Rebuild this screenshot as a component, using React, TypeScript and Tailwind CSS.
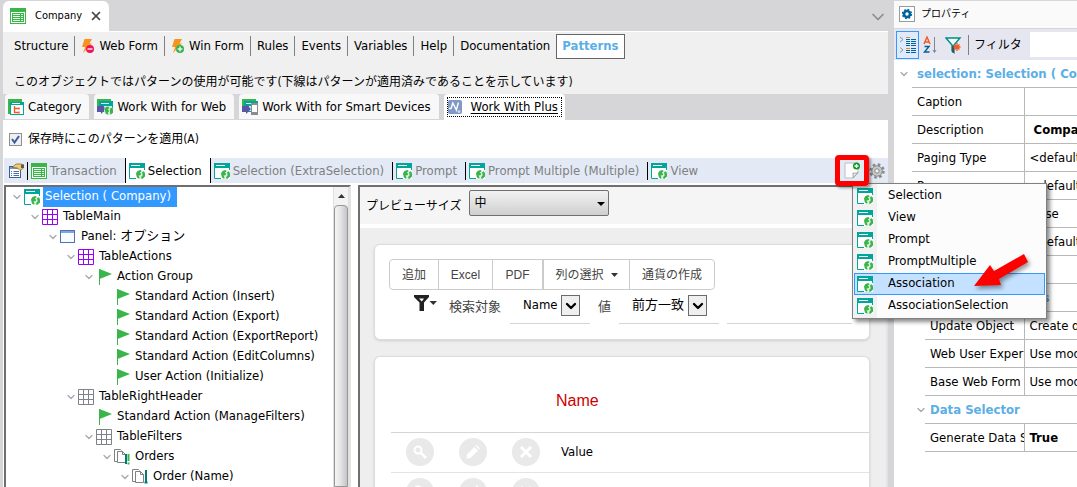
import React, { useState } from "react";
import { ChevronDown, X } from "lucide-react";
import clsx from "clsx";

/* ---------- icons ---------- */

function PageIcon() {
  return (
    <svg width="16" height="16" viewBox="0 0 16 16" className="shrink-0" aria-hidden="true">
      <path d="M0 0h16v16H0z" fill="#fff" />
      <path d="M0 0h16v5H0z" fill="#00a59b" />
      <path d="M2 2h9v1H2z" fill="#fff" />
      <path d="M.5 5v10.500H7M15.500 5v2" fill="none" stroke="#00a59b" />
      <circle cx="11.500" cy="11.500" r="4.500" fill="#dff3e2" />
      <path
        d="M7 10.500 8.500 8l3-1 1 1.300-1.700 1.400 1.500 1-.8 1.500-2 .3 1 2-.5 1.300-2-1.300zM13 9.300l2-1 1 2.200v3l-2.500 2.300-1.500-.3.500-2 1.200-1.200z"
        fill="#39b54a"
      />
    </svg>
  );
}

function ListIcon() {
  return (
    <svg width="16" height="16" viewBox="0 0 16 16" className="shrink-0" aria-hidden="true">
      <path d="M0 0h16v16H0z" fill="#39b54a" />
      <path d="M1 4h14v11H1z" fill="#fff" />
      <path d="M2 5h12v9H2z" fill="#39b54a" />
      <path d="M3 6.500h7M3 8.500h7M3 10.500h7M3 12.500h7M11 6.500h2M11 8.500h2M11 10.500h2M11 12.500h2" stroke="#e8f7ea" />
    </svg>
  );
}

function BoltIcon({ plus }: { plus?: boolean }) {
  return (
    <svg width="14" height="16" viewBox="0 0 14 16" className="shrink-0" aria-hidden="true">
      <path d="M3.500 1H11L8.500 5.500H11L2 15l2.200-6H1z" fill="#f7941e" />
      <circle cx="9" cy="11" r="4" fill={plus ? "#2fb34a" : "#f0145a"} />
      <path d="M6.500 11h5" stroke="#fff" strokeWidth="1.300" />
      {plus && <path d="M9 8.500v5" stroke="#fff" strokeWidth="1.300" />}
    </svg>
  );
}

function CategoryIcon() {
  return (
    <svg width="16" height="16" viewBox="0 0 16 16" className="shrink-0" aria-hidden="true">
      <path d="M0 0h14v3H3v12H0z" fill="#39b54a" />
      <path d="M2 3h14v13H2z" fill="#00a59b" />
      <path d="M3 6h12v9H3z" fill="#fff" />
      <path d="M4 4.500h8" stroke="#fff" />
      <path d="M6.500 7v6.500H11M6.500 9.500H11M11 8.500v2M11 12.500v2" stroke="#f15a24" strokeWidth="1.400" fill="none" />
    </svg>
  );
}

function WorkWithIcon({ device }: { device?: boolean }) {
  return (
    <svg width="16" height="16" viewBox="0 0 16 16" className="shrink-0" aria-hidden="true">
      <path d="M0 0h14v3H3v5H0z" fill="#39b54a" />
      <path d="M2 2h14v11H2z" fill="#00a59b" />
      <path d="M4 4h8v1H4zM7 7h8v5H7z" fill="#d5eeec" />
      <path d="M0 7h4V5l5 5-5 5v-2H0z" fill="#5a55a5" />
      {device ? (
        <>
          <path d="M9 4h7v12H9z" fill="#8c8c8c" />
          <path d="M10 6h5v7h-5z" fill="#fff" />
        </>
      ) : (
        <>
          <circle cx="11.500" cy="11.500" r="4.500" fill="#d5eeda" />
          <path d="M7.500 10 9 8l2.500-.5.8 1.500-1.500 1.200 1.500 1.500-1.500 2 .5 2-2.500-1zM13 9.500l2-.8 1 2v3l-2.500 2-.5-2z" fill="#39b54a" />
        </>
      )}
    </svg>
  );
}

function PlusPatternIcon() {
  return (
    <svg width="15" height="15" viewBox="0 0 15 15" className="shrink-0" aria-hidden="true">
      <rect width="14" height="14" rx="2" fill="#8099c6" />
      <path d="M1 8.500h2l1.800-5.500 3.600 7 2-7.500" fill="none" stroke="#fff" strokeWidth="1.400" />
      <circle cx="11" cy="11.500" r="1.500" fill="#c6d4ee" />
    </svg>
  );
}

function PropertiesIcon() {
  return (
    <svg width="17" height="16" viewBox="0 0 17 16" className="shrink-0" aria-hidden="true">
      <rect x="1.500" y="3.500" width="11" height="11" fill="#fff" stroke="#3d5f97" />
      <path d="M2 4h10v2H2z" fill="#7a9acb" />
      <path d="M3 8.500h1M5.500 8.500H11M3 10.500h1M5.500 10.500H11M3 12.500h1M5.500 12.500H11" stroke="#4b6ba3" />
      <path d="M4 4.500 8 1h5l2.500 1v3L12 7.500 9.500 5z" fill="#f0cb72" stroke="#7d5c1c" strokeWidth=".7" />
      <path d="M13 1.500h3v3.500h-3z" fill="#6a5a3a" />
    </svg>
  );
}

function GridIcon({ color }: { color: string }) {
  return (
    <svg width="16" height="16" viewBox="0 0 16 16" className="shrink-0" aria-hidden="true">
      <path d="M.5.5h15v15H.5zM5.500.5v15M10.500.5v15M.5 5.500h15M.5 10.500h15" fill="#fff" stroke={color} />
    </svg>
  );
}

function PanelIcon() {
  return (
    <svg width="16" height="16" viewBox="0 0 16 16" className="shrink-0" aria-hidden="true">
      <rect x=".5" y="1.500" width="14" height="12" fill="#f7faff" stroke="#4a72b4" />
      <path d="M1 2h13v2H1z" fill="#7fa5e0" />
    </svg>
  );
}

function FlagIcon() {
  return (
    <svg width="16" height="16" viewBox="0 0 16 16" className="shrink-0" aria-hidden="true">
      <path d="M3.500 0v16" stroke="#39b54a" />
      <path d="M3.500 0 16 5 3.500 10z" fill="#39b54a" />
    </svg>
  );
}

function OrderIcon({ many }: { many?: boolean }) {
  return (
    <svg width="16" height="16" viewBox="0 0 16 16" className="shrink-0" aria-hidden="true">
      <path d="M3 12.500H.5V.5h6l1 1M3.500 2.500h5l3 3v8h-8z" fill="#fff" stroke="#808080" />
      <path d="M8.500 2.500v3h3" fill="none" stroke="#808080" />
      {many ? (
        <>
          <path d="M12 5v10" stroke="#007d73" strokeWidth="2" />
          <path d="M14.500 5v7M14.500 13.500v2" stroke="#39b54a" strokeWidth="2" />
        </>
      ) : (
        <path d="M14 1v13M12.500 13.500h3" stroke="#007d73" strokeWidth="2" />
      )}
    </svg>
  );
}

function NoteIcon() {
  return (
    <svg width="16" height="17" viewBox="0 0 16 17" className="shrink-0" aria-hidden="true">
      <path d="M1 1h13v10l-5 5H1z" fill="#fdfdfd" stroke="#b9bfc6" />
      <path d="M9 16c.5-2-.2-4 0-5 1.500.3 3.500.2 5-.5z" fill="#e8ebee" stroke="#8d949b" strokeWidth=".8" />
      <circle cx="12.500" cy="4" r="3.500" fill="#0f9a1d" />
      <path d="M10.500 4h4M12.500 2v4" stroke="#fff" strokeWidth="1.300" />
    </svg>
  );
}

function GearIcon() {
  return (
    <svg width="16" height="16" viewBox="0 0 16 16" className="shrink-0" aria-hidden="true">
      <circle cx="8" cy="8" r="6.500" fill="none" stroke="#8a8a8a" strokeWidth="2.500" strokeDasharray="2.600 2.500" />
      <circle cx="8" cy="8" r="5.200" fill="#c9c9c9" stroke="#8a8a8a" />
      <circle cx="8" cy="8" r="2.200" fill="#eef2f9" stroke="#858585" />
    </svg>
  );
}

function BlueGearIcon() {
  return (
    <svg width="16" height="16" viewBox="0 0 16 16" className="shrink-0" aria-hidden="true">
      <rect x=".5" y=".5" width="15" height="15" fill="#fff" stroke="#9a9a9a" />
      <circle cx="8" cy="8" r="3" fill="none" stroke="#00629b" strokeWidth="2.600" />
      <circle cx="8" cy="8" r="4.500" fill="none" stroke="#00629b" strokeWidth="1.400" strokeDasharray="1.800 1.730" />
    </svg>
  );
}

function CategorizedIcon() {
  return (
    <svg width="18" height="18" viewBox="0 0 18 18" aria-hidden="true">
      <path d="m1 1 3 2.500L1 6M1 11.500 4 14l-3 2.500" fill="none" stroke="#8b949c" />
      <path d="M7 1.500h4M7 12.500h4" stroke="#f58220" />
      <path d="M7 3.500h4M12 3.500h5M7 5.500h4M12 5.500h5M7 7.500h4M12 7.500h5M7 9.500h4M12 9.500h5M12 12.500h5M7 14.500h4M12 14.500h5M7 16.500h4M12 16.500h5" stroke="#00629b" />
    </svg>
  );
}

function SortIcon() {
  return (
    <svg width="14" height="18" viewBox="0 0 14 18" aria-hidden="true">
      <path d="M1 8 4 1l3 7M2 6h4" fill="none" stroke="#f15a24" strokeWidth="1.400" />
      <path d="M1.500 10.500H6L1.500 16H6.500" fill="none" stroke="#00629b" strokeWidth="1.400" />
      <path d="M11.500 1v15M10 14l1.500 2.500L13 14" fill="none" stroke="#7d8790" />
    </svg>
  );
}

function FilterIcon() {
  return (
    <svg width="17" height="18" viewBox="0 0 17 18" aria-hidden="true">
      <path d="M1 2h14L9 9v7.500L7 15V9z" fill="#f2f8f7" stroke="#008f83" strokeWidth="1.400" />
      <path d="M8 9.500v7" stroke="#3a4a55" strokeWidth="1.800" />
      <path d="M12 7v8M8.500 11h7M9.500 8.500l5 5M14.500 8.500l-5 5" stroke="#f15a24" strokeWidth="1.300" />
    </svg>
  );
}

function FunnelIcon() {
  return (
    <svg width="23" height="16" viewBox="0 0 23 16" aria-hidden="true">
      <path d="M0 0h15v2L10 7.500V16H5.500V7.500L0 2z" fill="#222" />
      <path d="M5 3.500h5L7.800 6.500z" fill="#fff" />
      <path d="M15.500 6H23l-3.700 4z" fill="#333" />
    </svg>
  );
}

/* ---------- data ---------- */

const editorTabs = [
  { label: "Structure" },
  { label: "Web Form", icon: <BoltIcon /> },
  { label: "Win Form", icon: <BoltIcon plus /> },
  { label: "Rules" },
  { label: "Events" },
  { label: "Variables" },
  { label: "Help" },
  { label: "Documentation" },
];

const patternTabs = [
  { label: "Category", icon: <CategoryIcon /> },
  { label: "Work With for Web", icon: <WorkWithIcon /> },
  { label: "Work With for Smart Devices", icon: <WorkWithIcon device /> },
];

const nodeTabs = [
  { label: "Transaction", icon: <ListIcon /> },
  { label: "Selection", icon: <PageIcon /> },
  { label: "Selection (ExtraSelection)", icon: <PageIcon /> },
  { label: "Prompt", icon: <PageIcon /> },
  { label: "Prompt Multiple (Multiple)", icon: <PageIcon /> },
  { label: "View", icon: <PageIcon /> },
];

const indents = ["pl-1", "pl-[22px]", "pl-10", "pl-[58px]", "pl-[76px]", "pl-[94px]", "pl-[112px]"];

const treeNodes = [
  { label: "Selection ( Company)", level: 0, open: true, icon: <PageIcon /> },
  { label: "TableMain", level: 1, open: true, icon: <GridIcon color="#9900f5" /> },
  { label: "Panel: オプション", level: 2, open: true, icon: <PanelIcon /> },
  { label: "TableActions", level: 3, open: true, icon: <GridIcon color="#9900f5" /> },
  { label: "Action Group", level: 4, open: true, icon: <FlagIcon /> },
  { label: "Standard Action (Insert)", level: 5, icon: <FlagIcon /> },
  { label: "Standard Action (Export)", level: 5, icon: <FlagIcon /> },
  { label: "Standard Action (ExportReport)", level: 5, icon: <FlagIcon /> },
  { label: "Standard Action (EditColumns)", level: 5, icon: <FlagIcon /> },
  { label: "User Action (Initialize)", level: 5, icon: <FlagIcon /> },
  { label: "TableRightHeader", level: 3, open: true, icon: <GridIcon color="#7d828a" /> },
  { label: "Standard Action (ManageFilters)", level: 4, icon: <FlagIcon /> },
  { label: "TableFilters", level: 4, open: true, icon: <GridIcon color="#7d828a" /> },
  { label: "Orders", level: 5, open: true, icon: <OrderIcon many /> },
  { label: "Order (Name)", level: 6, open: true, icon: <OrderIcon /> },
];

const menuItems = ["Selection", "View", "Prompt", "PromptMultiple", "Association", "AssociationSelection"];

type Property = { name: string; value: string; bold?: boolean };

const selectionProps: Property[] = [
  { name: "Caption", value: "" },
  { name: "Description", value: " Company", bold: true },
  { name: "Paging Type", value: "<default>" },
  { name: "Page", value: "<default>" },
  { name: "", value: "False" },
  { name: "", value: "<default>" },
  { name: "", value: "" },
];

const templateProps: Property[] = [
  { name: "Update Object", value: "Create default" },
  { name: "Web User Experience", value: "Use model" },
  { name: "Base Web Form", value: "Use model" },
];

const dataProps: Property[] = [{ name: "Generate Data Selector", value: "True", bold: true }];

/* ---------- panels ---------- */

function NodeTree() {
  const [selected, setSelected] = useState(0);

  return (
    <div className="flex w-[347px] shrink-0 overflow-hidden border-t-2 border-l-2 border-r-2 border-t-[#6f6f6f] border-l-[#6f6f6f] border-r-[#e3e3e3]">
      <ul className="min-w-0 flex-1">
        {treeNodes.map((node, i) => (
          <li key={i} className={clsx("flex h-5 items-center whitespace-nowrap", indents[node.level])}>
            <span className="flex w-3.5 shrink-0 justify-center">
              {node.open && <ChevronDown className="h-3 w-3 text-[#a3a9af]" strokeWidth={2.5} />}
            </span>
            {node.icon}
            <button
              onClick={() => setSelected(i)}
              className={clsx("ml-[3px] h-5 px-0.5 pb-0.5 leading-4", i === selected && "bg-[#3399ff] pr-1.5 text-white")}
            >
              {node.label}
            </button>
          </li>
        ))}
      </ul>
      <div className="flex w-4 flex-col border-x border-[#e0e0e0] bg-[#f3f3f3]">
        <div className="flex h-[18px] items-center justify-center">
          <svg width="7" height="4" viewBox="0 0 7 4" aria-hidden="true">
            <path d="M0 4 3.500 0 7 4z" fill="#333" />
          </svg>
        </div>
        <div className="flex-1 rounded-t-sm border border-[#979797] bg-linear-to-r from-[#f5f5f5] via-[#e3e3e6] to-[#c4c4c9]" />
      </div>
    </div>
  );
}

function PreviewSelect({ id, value, className }: { id: string; value: string; className: string }) {
  return (
    <div className={clsx("flex h-[29px] items-start border-b border-[#d5d5d5] pl-3", className)}>
      <div className="relative">
        <select
          id={id}
          className="h-5 appearance-none bg-transparent pr-[22px] pl-px text-black outline-none"
        >
          <option>{value}</option>
        </select>
        <span className="pointer-events-none absolute top-0 right-0 flex h-[21px] w-[19px] items-center justify-center border border-[#6b6b6b] bg-[#efefef]">
          <ChevronDown className="h-4 w-4 text-black" strokeWidth={3.5} />
        </span>
      </div>
    </div>
  );
}

function RowAction({ label, children }: { label: string; children: React.ReactNode }) {
  return (
    <button aria-label={label} className="flex h-7 w-7 items-center justify-center rounded-full bg-[#e9e9e9]">
      <svg width="14" height="14" viewBox="0 0 14 14" aria-hidden="true">
        {children}
      </svg>
    </button>
  );
}

function RowActions() {
  return (
    <div className="flex gap-[25px] pl-[15px]">
      <RowAction label="Display">
        <circle cx="5" cy="5" r="3.500" fill="none" stroke="#fff" strokeWidth="2" />
        <path d="m8 8 5 5" stroke="#fff" strokeWidth="2.500" />
      </RowAction>
      <RowAction label="Update">
        <path d="M1 9.500 8.500 2 12 5.500 4.500 13 .5 13.500zM9.500 1l1-1L14 3.500l-1 1z" fill="#fff" />
      </RowAction>
      <RowAction label="Delete">
        <path d="m2 2 10 10M12 2 2 12" stroke="#fff" strokeWidth="3" />
      </RowAction>
    </div>
  );
}

function Preview() {
  return (
    <div className="flex min-w-0 flex-1 flex-col overflow-hidden border-t-2 border-l-2 border-r-2 border-t-[#6f6f6f] border-l-[#6f6f6f] border-r-[#e3e3e3] bg-[#eeeeee]">
      <div className="flex h-[41px] shrink-0 items-start gap-2 border-b-4 border-white bg-[#f5f5f5] pt-[3px] pl-1.5">
        <label htmlFor="preview-size" className="pt-2 text-xs leading-4">
          プレビューサイズ
        </label>
        <div className="relative">
          <select
            id="preview-size"
            className="h-[26px] w-[140px] appearance-none rounded-xs border border-[#707070] bg-linear-to-b from-[#f2f2f2] to-[#cfcfcf] pl-1 text-xs"
          >
            <option>中</option>
          </select>
          <svg width="8" height="4" viewBox="0 0 8 4" className="pointer-events-none absolute top-3 right-1" aria-hidden="true">
            <path d="M0 0h8L4 4z" fill="#000" />
          </svg>
        </div>
      </div>

      <div className="mt-4 mr-4 ml-3.5 h-24 shrink-0 rounded-md border border-[#dcdcdc] bg-white px-3.5 pt-3.5 shadow-sm">
        <div className="inline-flex h-[31px] rounded-sm border border-[#ccc] font-['Liberation_Sans','Noto_Sans_CJK_JP',sans-serif] text-xs text-[#444]">
          <button className="w-12">追加</button>
          <button className="w-[54px] border-l border-[#ccc]">Excel</button>
          <button className="w-[50px] border-l border-[#ccc]">PDF</button>
          <button className="flex w-[87px] items-center justify-center gap-[7px] border-l-2 border-[#ccc]">
            列の選択
            <svg width="7" height="4" viewBox="0 0 7 4" aria-hidden="true">
              <path d="M0 0h7L3.500 4z" fill="#333" />
            </svg>
          </button>
          <button className="w-[85px] border-l border-[#ccc]">通貨の作成</button>
        </div>
        <div className="flex pt-[5px] pl-[25px] text-[13px]">
          <button aria-label="Filters" className="flex">
            <FunnelIcon />
          </button>
          <label htmlFor="filter-field" className="w-[61px] pl-3 leading-6 whitespace-nowrap text-[#444]">
            検索対象
          </label>
          <PreviewSelect id="filter-field" value="Name" className="ml-3 w-20" />
          <label htmlFor="filter-operator" className="w-[29px] pl-2 leading-6 text-[#444]">
            値
          </label>
          <PreviewSelect id="filter-operator" value="前方一致" className="w-[100px]" />
          <input aria-label="Filter value" className="ml-2 h-[29px] w-[125px] min-w-0 border-b border-[#d5d5d5] outline-none" />
        </div>
      </div>

      <div className="mt-4 mr-4 ml-3.5 flex-1 rounded-t-md border border-b-0 border-[#dcdcdc] bg-white pl-4 shadow-sm">
        <table className="w-full border-collapse">
          <thead>
            <tr className="h-[75px] border-b border-[#d5d5d5]">
              <th className="w-[165px]" />
              <th className="pt-3.5 text-left font-['Liberation_Sans',sans-serif] text-base font-normal text-[#cc0000]">Name</th>
            </tr>
          </thead>
          <tbody>
            <tr className="h-10 border-b border-[#e3e3e3]">
              <td>
                <RowActions />
              </td>
              <td className="pl-[5px]">Value</td>
            </tr>
            <tr className="h-10">
              <td>
                <RowActions />
              </td>
              <td />
            </tr>
          </tbody>
        </table>
      </div>
    </div>
  );
}

function AddNodeMenu() {
  const [active, setActive] = useState("Association");

  return (
    <div
      role="menu"
      className="absolute top-full left-1/2 z-20 mt-1 w-[195px] border border-[#808080] bg-linear-to-r from-[#f1f1f1] from-[24px] to-[#fcfcfc] to-[24px] p-px shadow-[3px_3px_4px_rgba(0,0,0,0.45)]"
    >
      {menuItems.map((item) => (
        <button
          key={item}
          role="menuitem"
          onMouseEnter={() => setActive(item)}
          className={clsx(
            "flex h-[22px] w-full items-center gap-[15px] border pl-0.5 leading-4",
            item === active ? "border-[#3399ff] bg-[#c4e1ff]" : "border-transparent"
          )}
        >
          <PageIcon />
          <span className="pb-0.5">{item}</span>
        </button>
      ))}
      {/* callout arrow */}
      <svg width="58" height="40" viewBox="0 0 58 40" className="absolute top-[67px] left-[120px] drop-shadow-[2px_3px_2px_rgba(0,0,0,0.4)]" aria-hidden="true">
        <path d="M1 35 17 14l4 6 30-17 4 8-29 17 2 6z" fill="#ff0000" />
      </svg>
    </div>
  );
}

function NodeToolbar() {
  const [tab, setTab] = useState("Selection");

  return (
    <div className="ml-px flex h-[25px] items-center bg-[#e3eaf6]">
      <button aria-label="Properties" className="pr-0.5 pl-1">
        <PropertiesIcon />
      </button>
      {nodeTabs.map((t) => (
        <div key={t.label} className="flex h-full items-center">
          <span className={clsx("w-px bg-black", t.label === tab || t.label === "Selection (ExtraSelection)" ? "h-full" : "h-[18px]")} />
          <button
            onClick={() => setTab(t.label)}
            className={clsx(
              "flex h-full items-center gap-[3px] pr-2 pl-[3px] whitespace-nowrap",
              t.label === tab ? "bg-white text-black" : "text-[#808080]"
            )}
          >
            {t.icon}
            {t.label}
          </button>
        </div>
      ))}
      <div className="relative mr-2 ml-auto flex h-[17px] w-[18px] justify-center">
        <button aria-label="Add node">
          <NoteIcon />
        </button>
        <AddNodeMenu />
        <span className="absolute -top-[7px] -left-2 z-30 h-[31px] w-[34px] rounded-sm border-5 border-[#ff0000] shadow-[2px_2px_3px_rgba(0,0,0,0.4)]" />
      </div>
      <button aria-label="Settings" className="mr-[3px]">
        <GearIcon />
      </button>
    </div>
  );
}

function PropertyTable({ rows, nested }: { rows: Property[]; nested?: boolean }) {
  return (
    <div className={nested ? "ml-[31px]" : "ml-[18px]"}>
      <table className="w-full table-fixed border-collapse">
        <tbody>
          {rows.map((row, i) => (
            <tr key={i} className="h-7 border-y border-[#b8b8b8]">
              <th
                scope="row"
                className={clsx(
                  "overflow-hidden border-r border-[#b8b8b8] pl-[5px] text-left font-normal whitespace-nowrap",
                  nested ? "w-[99px]" : "w-[112px]"
                )}
              >
                {row.name}
              </th>
              <td className={clsx("overflow-hidden pl-[5px] whitespace-pre", row.bold && "font-bold")}>{row.value}</td>
            </tr>
          ))}
        </tbody>
      </table>
    </div>
  );
}

function GroupTitle({ title, nested }: { title: string; nested?: boolean }) {
  return (
    <h3
      className={clsx(
        "flex h-[27px] items-center font-bold whitespace-nowrap text-[#5baee6]",
        nested ? "gap-[3px] pl-[21px]" : "gap-[7px] pl-1"
      )}
    >
      <ChevronDown className="h-3 w-3 shrink-0 text-[#a3a9af]" strokeWidth={2.5} />
      {title}
    </h3>
  );
}

function PropertiesPanel() {
  return (
    <aside className="mt-px flex w-[183px] shrink-0 flex-col overflow-hidden bg-white">
      <header className="flex h-[27px] items-center gap-1.5 bg-[#fafafa] pb-0.5 pl-[5px] text-[10px]">
        <BlueGearIcon />
        プロパティ
      </header>
      <div className="flex h-8 items-center border-t border-[#d6d5d8] bg-[#e6e6f0]">
        <button aria-label="Categorized" className="ml-0.5 flex h-7 w-[23px] items-center justify-center border border-[#3399ff] bg-[#dfeafa]">
          <CategorizedIcon />
        </button>
        <button aria-label="Sort" className="ml-1">
          <SortIcon />
        </button>
        <button aria-label="Filter" className="ml-2">
          <FilterIcon />
        </button>
        <span className="ml-1.5 h-5 w-px bg-[#808080]" />
        <label htmlFor="property-filter" className="w-[61px] shrink-0 pl-[5px] text-xs whitespace-nowrap">
          フィルタ
        </label>
        <input id="property-filter" className="h-[25px] min-w-0 flex-1 bg-white outline-none" />
      </div>
      <GroupTitle title="selection: Selection ( Company)" />
      <PropertyTable rows={selectionProps} />
      <GroupTitle title="Template Settings" nested />
      <PropertyTable rows={templateProps} nested />
      <GroupTitle title="Data Selector" nested />
      <PropertyTable rows={dataProps} nested />
    </aside>
  );
}

export default function App() {
  return (
    <div className="flex h-screen overflow-hidden bg-[#d6d5d8] font-['DejaVu_Sans_Condensed','Noto_Sans_CJK_JP',sans-serif] text-[13px] text-black">
      <main className="mr-1.5 ml-[3px] flex min-w-0 flex-1 flex-col">
        {/* Document tabs */}
        <div className="flex h-8 items-end justify-between border-b border-white">
          <div className="flex h-[30px] items-center rounded-t-md bg-white pr-1.5 pl-[7px] text-[11px]">
            <ListIcon />
            <span className="ml-[9px] w-[54px]">Company</span>
            <button aria-label="Close" className="flex">
              <X className="h-3.5 w-3.5 text-[#444]" strokeWidth={3} />
            </button>
          </div>
          <button aria-label="Open documents" className="mb-1">
            <ChevronDown className="h-5 w-5 text-[#8b8b8b]" strokeWidth={2} />
          </button>
        </div>

        {/* Object sections */}
        <div className="h-[62px] bg-[#f0f0f0]">
          <nav className="flex h-7 items-center pl-[5px] whitespace-nowrap">
            {editorTabs.map((t, i) => (
              <button
                key={t.label}
                className={clsx("flex h-5 items-center gap-1 px-1.5", i < editorTabs.length - 1 && "border-r border-[#808080]")}
              >
                {t.icon}
                {t.label}
              </button>
            ))}
            <button className="h-[25px] border border-[#666] bg-white px-[5px] font-bold text-[#5baee6]">Patterns</button>
          </nav>
          <p className="pt-3.5 pl-[11px] text-xs leading-4 whitespace-nowrap">
            このオブジェクトではパターンの使用が可能です(下線はパターンが適用済みであることを示しています)
          </p>
        </div>

        {/* Patterns */}
        <div className="flex h-[26px] gap-[5px] pl-0.5 whitespace-nowrap">
          {patternTabs.map((t) => (
            <button key={t.label} className="flex h-[25px] items-center gap-1 rounded-t-sm bg-[#f8f8f8] pr-2 pl-[3px]">
              {t.icon}
              {t.label}
            </button>
          ))}
          <button className="flex h-full items-center rounded-t-sm bg-white px-[3px]">
            <span className="flex h-5 items-center gap-2 border border-dotted border-black pr-[3px]">
              <PlusPatternIcon />
              <span className="underline underline-offset-2">Work With Plus</span>
            </span>
          </button>
        </div>

        <div className="flex min-h-0 flex-1 flex-col bg-white">
          <div className="flex h-[38px] items-center gap-1.5 pl-1.5">
            <span className="relative flex">
              <input
                id="apply-pattern"
                type="checkbox"
                defaultChecked
                className="peer h-[13px] w-[13px] appearance-none border border-[#8e8f8f] bg-[#eef0f4]"
              />
              <svg width="13" height="13" viewBox="0 0 13 13" className="pointer-events-none absolute inset-0 hidden peer-checked:block" aria-hidden="true">
                <path d="m3 6 2.500 3.500L10 3" fill="none" stroke="#3c5a96" strokeWidth="2" />
              </svg>
            </span>
            <label htmlFor="apply-pattern" className="text-xs">
              保存時にこのパターンを適用(A)
            </label>
          </div>
          <NodeToolbar />
          <div className="mt-0.5 ml-px flex min-h-0 flex-1 gap-[7px]">
            <NodeTree />
            <Preview />
          </div>
        </div>
      </main>
      <PropertiesPanel />
    </div>
  );
}
